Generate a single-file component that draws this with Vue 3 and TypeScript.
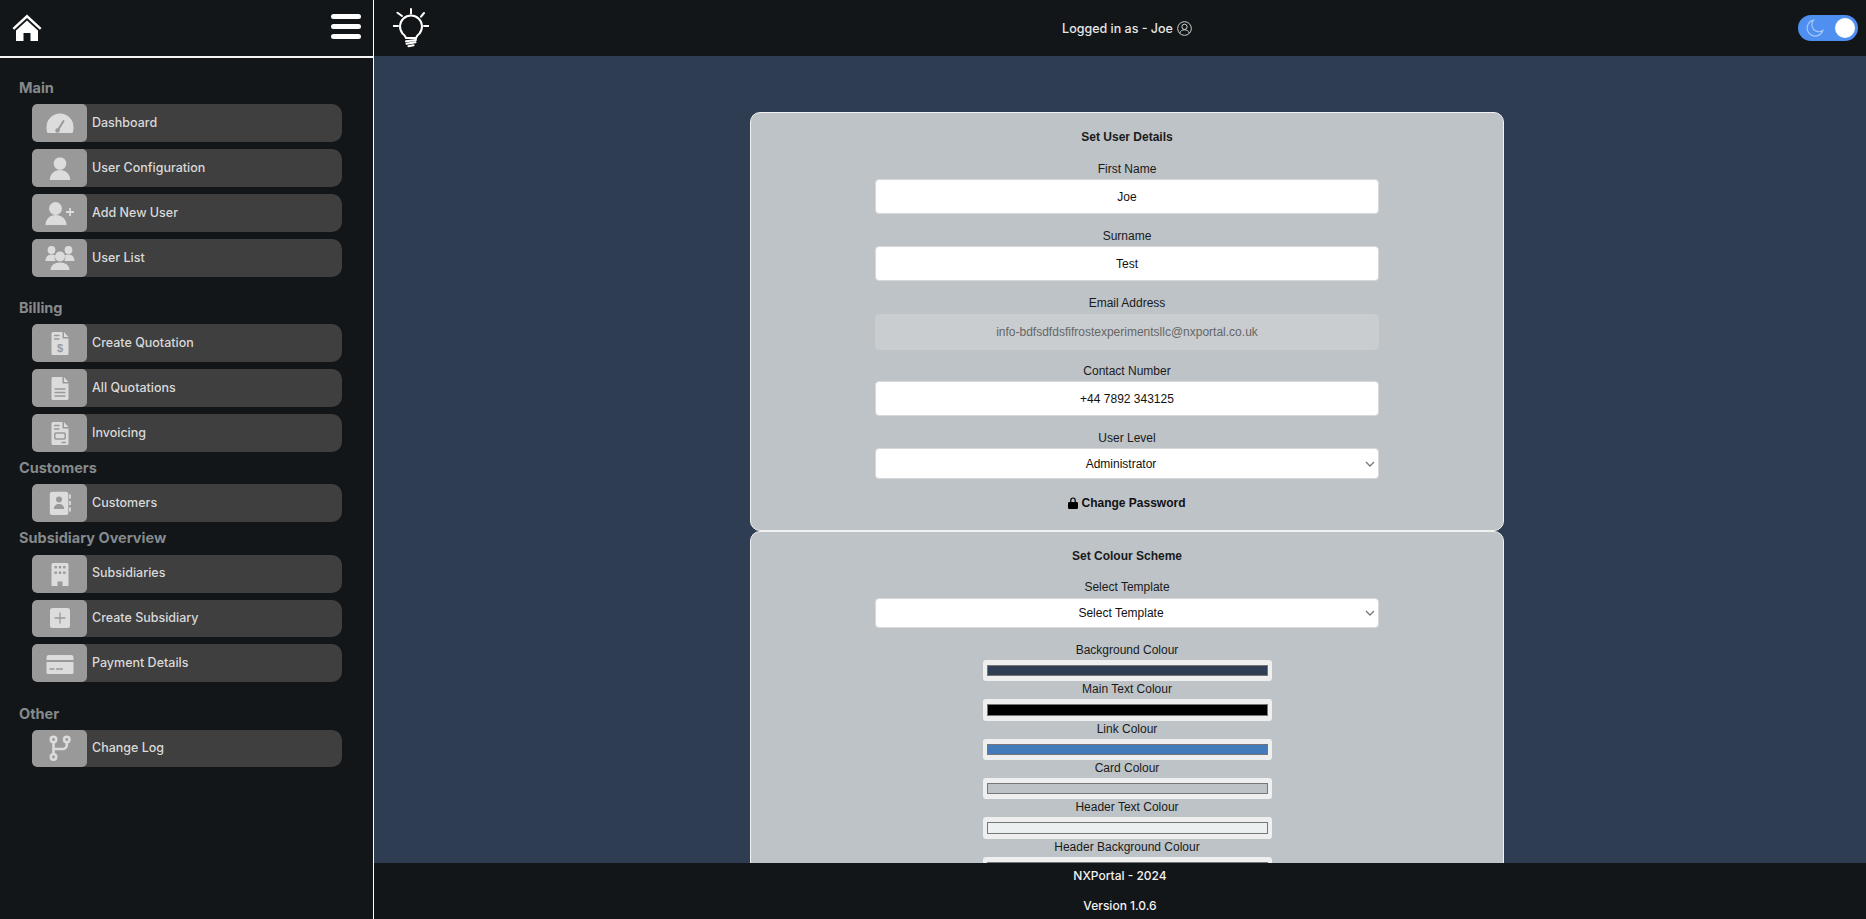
<script setup lang="ts">
interface NavItem { label: string; icon: string }
interface NavSection { title: string; cls: string; items: NavItem[] }

const sections: NavSection[] = [
  { title: 'Main', cls: 's-main', items: [
    { label: 'Dashboard', icon: 'gauge' },
    { label: 'User Configuration', icon: 'user' },
    { label: 'Add New User', icon: 'useradd' },
    { label: 'User List', icon: 'users' },
  ] },
  { title: 'Billing', cls: 's-billing', items: [
    { label: 'Create Quotation', icon: 'docdollar' },
    { label: 'All Quotations', icon: 'doclines' },
    { label: 'Invoicing', icon: 'invoice' },
  ] },
  { title: 'Customers', cls: 's-tight', items: [
    { label: 'Customers', icon: 'contacts' },
  ] },
  { title: 'Subsidiary Overview', cls: 's-tight s-sub', items: [
    { label: 'Subsidiaries', icon: 'building' },
    { label: 'Create Subsidiary', icon: 'plus' },
    { label: 'Payment Details', icon: 'card' },
  ] },
  { title: 'Other', cls: 's-other', items: [
    { label: 'Change Log', icon: 'branch' },
  ] },
]

const colours = [
  { label: 'Background Colour', value: '#2f3e53' },
  { label: 'Main Text Colour', value: '#000000' },
  { label: 'Link Colour', value: '#437ab9' },
  { label: 'Card Colour', value: '#bdc3c7' },
  { label: 'Header Text Colour', value: '#ecf0f1' },
  { label: 'Header Background Colour', value: '#ecf0f1' },
]
</script>

<template>
  <div class="app">
    <aside class="sidebar">
      <div class="side-head">
        <svg class="home" width="30" height="28" viewBox="0 0 30 28">
          <path d="M15 .5 29.5 14l-1.6 1.8L15 4 2.100 15.800.5 14z" fill="#fff" />
          <path d="M15 6.500 26 16.500V27h-7.500v-8h-7v8H4V16.500z" fill="#fff" />
        </svg>
        <div class="burger"><span></span><span></span><span></span></div>
      </div>
      <nav class="nav">
        <section v-for="s in sections" :key="s.title" :class="['sec', s.cls]">
          <h3 class="sec-title">{{ s.title }}</h3>
          <div class="sec-items">
            <a v-for="it in s.items" :key="it.label" class="item">
              <span class="item-icon">
                <svg width="28" height="28" viewBox="0 0 28 28" class="ico">
                  <template v-if="it.icon === 'gauge'">
                    <path d="M1.500 24C.8 22.300.5 20.200.5 18a13.500 13.500 0 0 1 27 0c0 2.200-.3 4.300-1 6z" />
                    <path d="M12 21 17.500 12" class="cut-line" />
                    <circle cx="11.500" cy="21.500" r="2.200" class="cut" />
                  </template>
                  <template v-else-if="it.icon === 'user'">
                    <circle cx="14" cy="9.500" r="6.300" />
                    <path d="M3.800 26c0-6 4.500-10 10.200-10s10.200 4 10.200 10z" />
                  </template>
                  <template v-else-if="it.icon === 'useradd'">
                    <circle cx="9.500" cy="9.500" r="6.500" />
                    <path d="M-.5 26c0-6 4.500-10 10.200-10s10.800 4 10.800 10z" />
                    <path d="M24 9v8M20 13h8" class="cut-line light" />
                  </template>
                  <template v-else-if="it.icon === 'users'">
                    <circle cx="5.500" cy="6" r="3.900" />
                    <circle cx="22.500" cy="6" r="3.900" />
                    <path d="M-.5 17c0-4 2.500-6.500 6-6.500 1.500 0 2.500.4 3.500 1-.7 1.500-.4 3.800.8 5.500z" />
                    <path d="M28.500 17c0-4-2.500-6.500-6-6.500-1.500 0-2.500.4-3.500 1 .7 1.500.4 3.800-.8 5.500z" />
                    <circle cx="14" cy="12.500" r="5" />
                    <path d="M4.500 26c0-4.500 4-7.500 9.500-7.500s9.500 3 9.500 7.500z" />
                  </template>
                  <template v-else-if="it.icon === 'docdollar' || it.icon === 'doclines' || it.icon === 'invoice'">
                    <path d="M7 3h9.500v6.500h6V24.500a1.500 1.500 0 0 1-1.500 1.500H7a1.500 1.500 0 0 1-1.500-1.500V4.500A1.500 1.500 0 0 1 7 3z" />
                    <path d="M18 3l4.500 5H18z" />
                    <template v-if="it.icon === 'docdollar'">
                      <path d="M8.500 6.500h4.500M8.500 10h4.500" class="cut-line thin" />
                      <text x="14" y="23" text-anchor="middle" class="dollar">$</text>
                    </template>
                    <template v-else-if="it.icon === 'doclines'">
                      <path d="M9 15h10M9 18.500h10M9 22h10" class="cut-line thin" />
                    </template>
                    <template v-else>
                      <path d="M8.500 6.500h4.500M8.500 10h4.500M16 23.500h3.500" class="cut-line thin" />
                      <rect x="8.800" y="14" width="10.400" height="6" rx="1" class="cut-stroke" />
                    </template>
                  </template>
                  <template v-else-if="it.icon === 'contacts'">
                    <rect x="3.800" y="2.700" width="18.500" height="23.300" rx="2.500" />
                    <path d="M24 5.500v4M24 12v4M24 18.500v4" class="cut-line light" />
                    <circle cx="13" cy="10.500" r="3" class="cut" />
                    <path d="M7.800 20c0-3 2.300-5 5.200-5s5.200 2 5.200 5z" class="cut" />
                  </template>
                  <template v-else-if="it.icon === 'building'">
                    <path d="M7 3h14a1.500 1.500 0 0 1 1.500 1.500V26H16.500v-4.500h-5V26H5.500V4.500A1.500 1.500 0 0 1 7 3z" />
                    <g class="cut">
                      <rect x="8.500" y="6" width="2.400" height="2.400" /><rect x="12.800" y="6" width="2.400" height="2.400" /><rect x="17.100" y="6" width="2.400" height="2.400" />
                      <rect x="8.500" y="11.500" width="2.400" height="2.400" /><rect x="12.800" y="11.500" width="2.400" height="2.400" /><rect x="17.100" y="11.500" width="2.400" height="2.400" />
                    </g>
                  </template>
                  <template v-else-if="it.icon === 'plus'">
                    <rect x="4" y="4" width="20" height="20" rx="2.500" />
                    <path d="M14 9v10M9 14h10" class="cut-line thin" />
                  </template>
                  <template v-else-if="it.icon === 'card'">
                    <path d="M.5 8.500a2.500 2.500 0 0 1 2.500-2.500h22a2.500 2.500 0 0 1 2.500 2.500v2.500H.5z" />
                    <path d="M.5 13h27v10.500a1.500 1.500 0 0 1-1.500 1.500H2a1.500 1.500 0 0 1-1.500-1.500z" />
                    <path d="M4 20h4M10.500 20h6" class="cut-line thin" />
                  </template>
                  <template v-else-if="it.icon === 'branch'">
                    <g class="stroke-ico">
                      <circle cx="7.500" cy="5.500" r="2.700" />
                      <circle cx="20.800" cy="5.500" r="2.700" />
                      <circle cx="7.500" cy="23" r="2.700" />
                      <path d="M7.500 8.500v11.500M20.800 8.500v2.500a4 4 0 0 1-4 4H7.500" />
                    </g>
                  </template>
                </svg>
              </span>
              <span class="item-label">{{ it.label }}</span>
            </a>
          </div>
        </section>
      </nav>
    </aside>

    <div class="main">
      <header class="topbar">
        <div class="bulb-box">
          <svg width="36" height="40" viewBox="0 0 36 40" class="bulb">
            <path d="M13 30c-.3-1.500-1.500-3-3.500-4.500a11 11 0 1 1 17 0c-2 1.500-3.200 3-3.500 4.500z" />
            <path d="M18 1v4.500M.5 18h4.500M31 18h4.500M4.500 4.700l4.500 3.300M31 5l-3 3.700M13 33.300l10-1.300M13.500 35.700l9-1.400M15.500 38.300l5-1" />
          </svg>
        </div>
        <div class="logged">
          <span>Logged in as - Joe</span>
          <svg width="15" height="15" viewBox="0 0 16 16" class="who">
            <circle cx="8" cy="8" r="7.300" />
            <circle cx="8" cy="6.200" r="2.800" />
            <path d="M2.900 13c.6-2.300 2.600-3.600 5.100-3.600s4.500 1.300 5.100 3.600" />
          </svg>
        </div>
        <div class="toggle">
          <svg width="18" height="18" viewBox="0 0 18 18" class="moon">
            <path d="M7.500 1.200a8 8 0 1 0 9.300 10.300 7 7 0 0 1-9.300-10.300z" />
          </svg>
          <span class="knob"></span>
        </div>
      </header>

      <div class="content">
        <form class="card">
          <h4 class="card-title">Set User Details</h4>
          <label class="field">
            <span class="lbl">First Name</span>
            <input class="inp" value="Joe" />
          </label>
          <label class="field">
            <span class="lbl">Surname</span>
            <input class="inp" value="Test" />
          </label>
          <label class="field f-email">
            <span class="lbl">Email Address</span>
            <input class="inp inp-off" value="info-bdfsdfdsfifrostexperimentsllc@nxportal.co.uk" disabled />
          </label>
          <label class="field">
            <span class="lbl">Contact Number</span>
            <input class="inp" value="+44 7892 343125" />
          </label>
          <label class="field f-level">
            <span class="lbl">User Level</span>
            <select class="sel s-tall"><option>Administrator</option></select>
          </label>
          <a class="pw">
            <svg width="10" height="12" viewBox="0 0 10 12"><path d="M2.200 5V3.200a2.800 2.800 0 0 1 5.600 0V5H8.800A1.200 1.200 0 0 1 10 6.200v4.600A1.200 1.200 0 0 1 8.800 12H1.200A1.200 1.200 0 0 1 0 10.800V6.200A1.200 1.200 0 0 1 1.200 5zm1.200 0h3.200V3.200a1.600 1.600 0 0 0-3.200 0z" /></svg>
            <span>Change Password</span>
          </a>
        </form>

        <form class="card">
          <h4 class="card-title scheme">Set Colour Scheme</h4>
          <label class="field tpl">
            <span class="lbl">Select Template</span>
            <select class="sel"><option>Select Template</option></select>
          </label>
          <label v-for="c in colours" :key="c.label" class="col-field">
            <span class="lbl">{{ c.label }}</span>
            <input type="color" class="col" :value="c.value" />
          </label>
        </form>
      </div>

      <footer class="footer">
        <p>NXPortal - 2024</p>
        <p>Version 1.0.6</p>
      </footer>
    </div>
  </div>
</template>

<style>
html, body { margin: 0; height: 100%; overflow: hidden; }
</style>

<style scoped>
.app {
  display: flex;
  height: 919px;
  overflow: hidden;
  background: #2f3d52;
  font-family: "Inter", "Liberation Sans", sans-serif;
}
.sidebar {
  flex: 0 0 373px;
  background: #121618;
  border-right: 1px solid #fff;
}
.side-head {
  height: 56px;
  border-bottom: 2px solid #f4f4f4;
  display: flex;
  align-items: center;
  justify-content: space-between;
  padding: 0 12px;
}
.burger { display: flex; flex-direction: column; gap: 5px; width: 30px; margin-top: -3px; }
.burger span { height: 5.300px; background: #fff; border-radius: 3px; }
.nav { padding: 18px 31px 0 19px; }
.sec-title {
  margin: 0 0 4px;
  font-size: 14.500px;
  line-height: 24px;
  font-weight: 700;
  color: #858a8d;
}
.sec-items { display: flex; flex-direction: column; gap: 7px; padding-left: 13px; }
.s-billing { margin-top: 19px; }
.s-tight { margin-top: 4px; }
.s-other { margin-top: 20px; }
.s-sub .sec-title { margin-bottom: 5px; }
.item {
  display: flex;
  align-items: center;
  height: 38px;
  border-radius: 5px 10px 10px 5px;
  background: #3f3f3f;
  overflow: hidden;
}
.s-sub .item { height: 37.670px; }
.s-other .item { height: 37px; }
.item-icon {
  flex: 0 0 55px;
  align-self: stretch;
  display: flex;
  align-items: center;
  justify-content: center;
  background: #999;
  border-radius: 5px;
}
.item-label {
  margin-left: 5px;
  padding-bottom: 2px;
  font-size: 12.500px;
  font-weight: 500;
  color: #d9d9d9;
}
.ico { fill: #dcdcdc; overflow: visible; }
.cut { fill: #999; }
.cut-line { fill: none; stroke: #999; stroke-width: 2; stroke-linecap: round; }
.cut-line.thin { stroke-width: 1.300; }
.cut-line.light { stroke: #dcdcdc; stroke-width: 1.800; stroke-linecap: butt; }
.cut-stroke { fill: none; stroke: #999; stroke-width: 1.500; }
.dollar { fill: #999; font: 700 11px "Liberation Sans", sans-serif; }
.stroke-ico { fill: none; stroke: #dcdcdc; stroke-width: 2.600; }

.main { flex: 1; min-width: 0; display: flex; flex-direction: column; }
.topbar {
  flex: 0 0 56px;
  background: #121618;
  display: flex;
  align-items: center;
  justify-content: space-between;
  padding: 0 8px 0 19px;
}
.bulb-box { width: 63px; display: flex; }
.bulb { fill: none; stroke: #fff; stroke-width: 2; stroke-linecap: round; }
.logged {
  display: flex;
  align-items: center;
  gap: 4px;
  color: #e6e6e6;
  font-size: 12.500px;
  font-weight: 500;
}
.who { fill: none; stroke: #d8d8d8; stroke-width: 1; }
.toggle {
  width: 60px;
  height: 26px;
  border-radius: 13px;
  background: #4f8ff0;
  display: flex;
  align-items: center;
  justify-content: space-between;
  padding: 0 3px 0 8px;
  box-sizing: border-box;
}
.moon { fill: none; stroke: #a9c9f7; stroke-width: 1.200; }
.knob { width: 20px; height: 20px; border-radius: 50%; background: #fff; }

.content {
  flex: 1;
  min-height: 0;
  overflow: hidden;
  padding: 56px 0 0 14px;
  display: flex;
  flex-direction: column;
  align-items: center;
  font-family: "Liberation Sans", Arial, sans-serif;
  font-size: 12px;
  color: #1a1a1a;
}
.card {
  flex: none;
  box-sizing: border-box;
  width: 754px;
  padding: 17px 0 20px;
  background: #bdc3c7;
  border: 1px solid #f1f1f1;
  border-radius: 10px;
  display: flex;
  flex-direction: column;
  align-items: center;
}
.card-title { margin: 0 0 18px; font-size: 12px; line-height: 14px; font-weight: 700; }
.card-title.scheme { margin-bottom: 17px; }
.field { display: flex; flex-direction: column; align-items: center; width: 504px; margin-bottom: 15px; }
.lbl { display: block; line-height: 14px; text-align: center; margin-bottom: 3px; }
.inp {
  box-sizing: border-box;
  width: 100%;
  height: 35px;
  border: 1px solid #d6d8da;
  border-radius: 4px;
  background: #fff;
  text-align: center;
  font: 12px "Liberation Sans", Arial, sans-serif;
  color: #111;
  outline: none;
}
.f-email { margin-bottom: 14px; }
.f-email .lbl { margin-bottom: 4px; }
.inp-off { height: 36px; border-color: #c9cdd0; background: #c9cdd0; color: #666; }
.sel {
  box-sizing: border-box;
  width: 100%;
  height: 30px;
  padding: 0 12px 0 0;
  border: 1px solid #d6d8da;
  border-radius: 4px;
  background: #fff url("data:image/svg+xml,%3Csvg xmlns='http://www.w3.org/2000/svg' width='10' height='6' viewBox='0 0 10 6'%3E%3Cpath d='M1 1l4 4 4-4' fill='none' stroke='%23777' stroke-width='1.300'/%3E%3C/svg%3E") no-repeat right 3px center;
  appearance: none;
  text-align: center;
  font: 12px "Liberation Sans", Arial, sans-serif;
  color: #111;
}
.s-tall { height: 31px; }
.f-level { margin-bottom: 14px; }
.field.tpl { margin-bottom: 15px; }
.field.tpl .lbl { margin-bottom: 4px; }
.pw {
  display: flex;
  align-items: center;
  gap: 3px;
  margin-top: 3px;
  height: 14px;
  font-weight: 700;
  color: #111;
}
.col-field { display: flex; flex-direction: column; align-items: center; width: 289px; margin-bottom: 1px; }
.col-field .lbl { margin-bottom: 3px; }
.col {
  display: block;
  box-sizing: border-box;
  width: 100%;
  height: 21.330px;
  padding: 5px 4px;
  border: none;
  border-radius: 3px;
  background: #efefef;
}
.col::-webkit-color-swatch-wrapper { padding: 0; }
.col::-webkit-color-swatch { border: 1px solid #767676; border-radius: 0; }

.footer {
  flex: 0 0 56px;
  background: #121618;
  text-align: center;
  color: #f2f2f2;
  font-size: 12px;
  font-weight: 500;
  line-height: 16px;
}
.footer p { margin: 5px 0 0; }
.footer p + p { margin-top: 14px; }
</style>
